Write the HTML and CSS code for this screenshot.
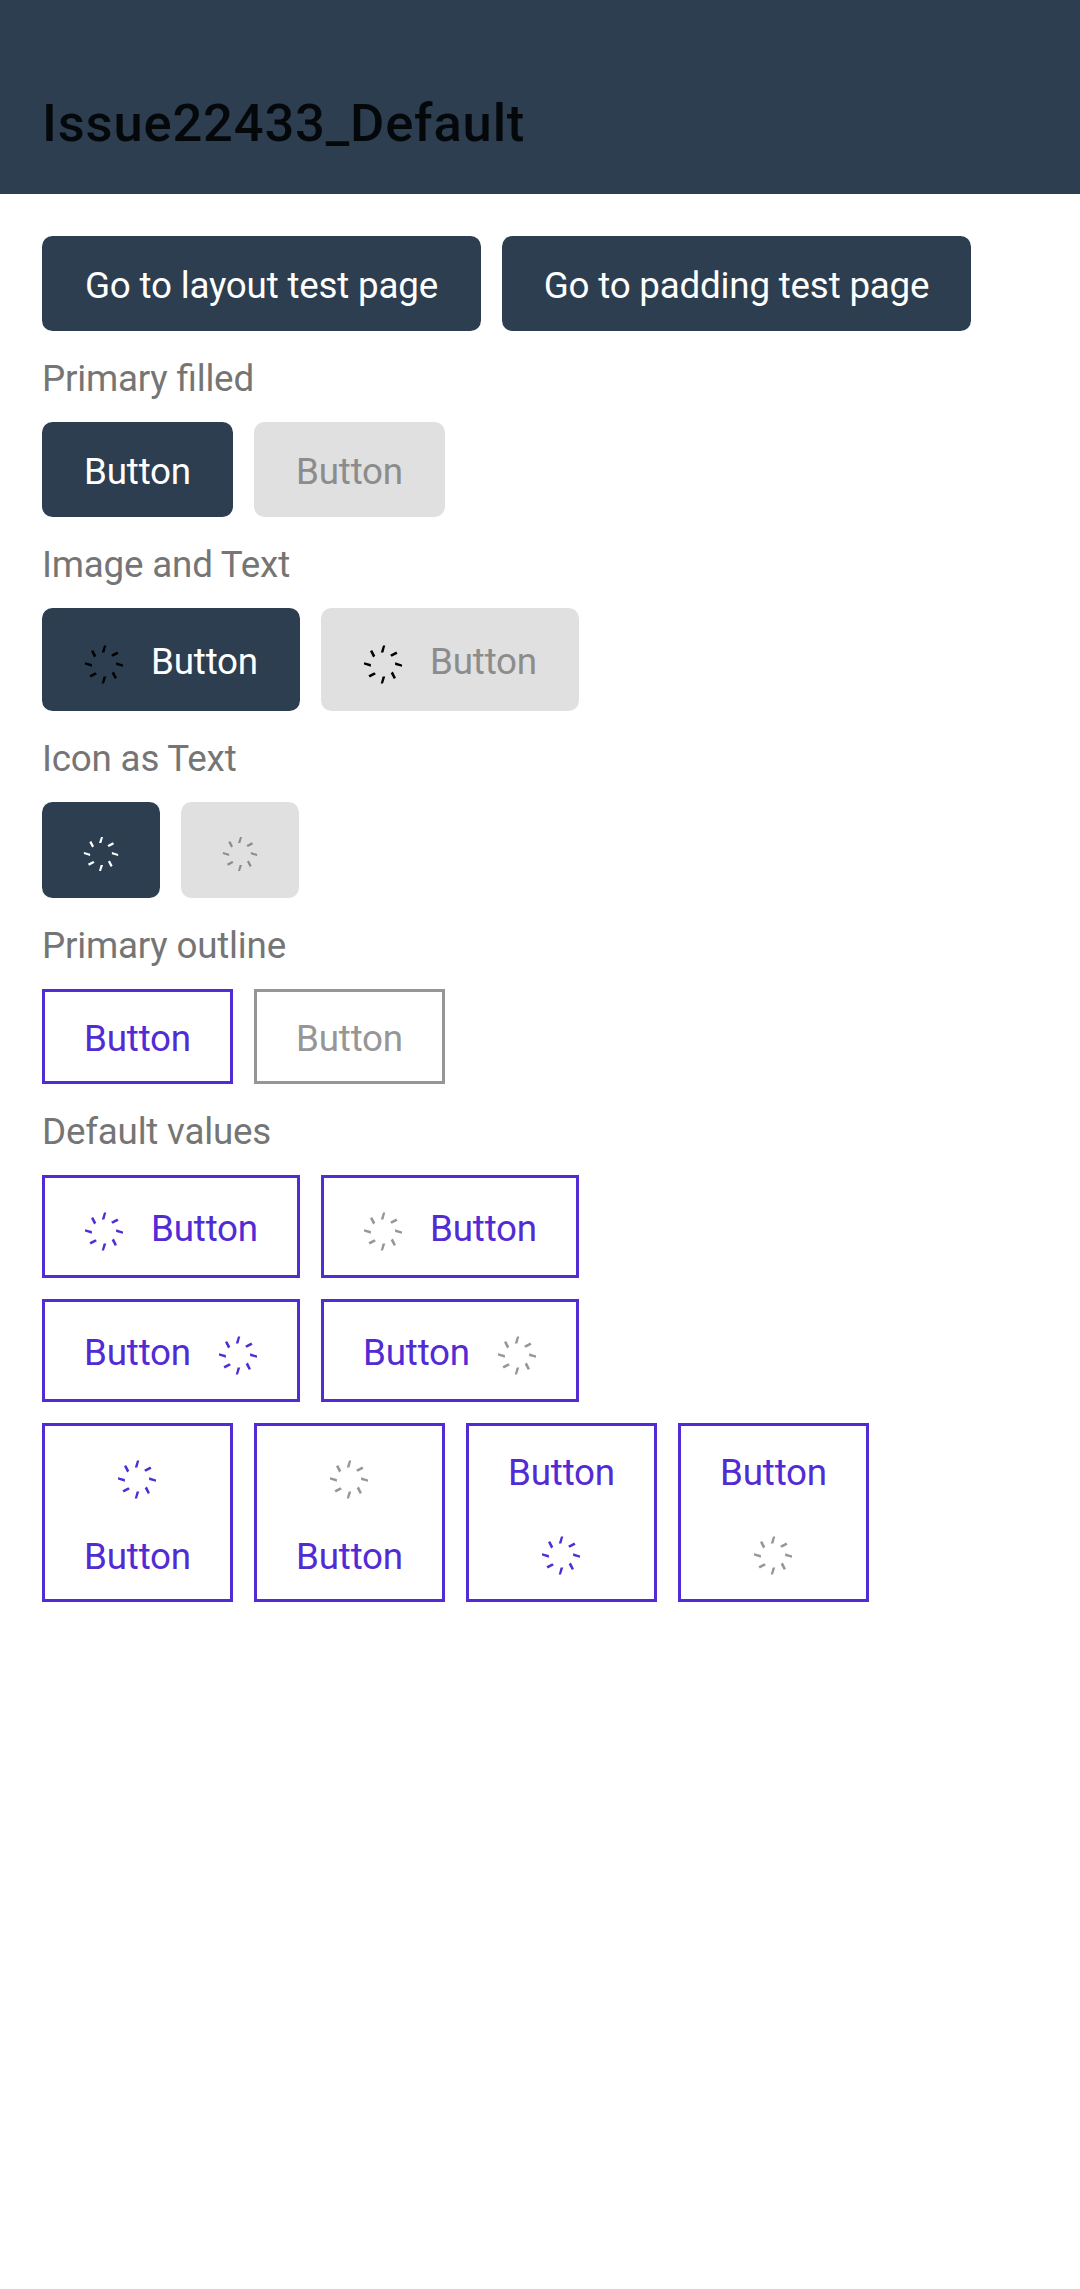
FILE: index.html
```html
<!DOCTYPE html>
<html lang="en">
<head>
<meta charset="utf-8">
<title>Issue22433_Default</title>
<link rel="stylesheet" href="styles.css">
</head>
<body>
<svg class="defs" width="0" height="0" aria-hidden="true">
  <defs>
    <symbol id="spin" viewBox="-20.5 -20.5 41 41">
      <g id="pair">
        <path d="M0-19.5H2.3L.4-12.4H-2.3Z"/>
        <path d="M13.5-13.3L14.9-11.1L8.9-7.9L7.3-10.1Z"/>
      </g>
      <use href="#pair" transform="rotate(90)"/>
      <use href="#pair" transform="rotate(180)"/>
      <use href="#pair" transform="rotate(270)"/>
    </symbol>
  </defs>
</svg>
<header class="bar"><h1>Issue22433_Default</h1></header>
<main class="content">
  <div class="row">
    <button class="btn filled layout"><span>Go to layout test page</span></button>
    <button class="btn filled padding"><span>Go to padding test page</span></button>
  </div>
  <p class="label">Primary filled</p>
  <div class="row">
    <button class="btn filled"><span>Button</span></button>
    <button class="btn filled off"><span>Button</span></button>
  </div>
  <p class="label">Image and Text</p>
  <div class="row">
    <button class="btn filled wide"><svg class="icon black"><use href="#spin"/></svg><span>Button</span></button>
    <button class="btn filled off wide"><svg class="icon black"><use href="#spin"/></svg><span>Button</span></button>
  </div>
  <p class="label">Icon as Text</p>
  <div class="row">
    <button class="btn filled glyph"><svg class="icon"><use href="#spin"/></svg></button>
    <button class="btn filled off glyph"><svg class="icon"><use href="#spin"/></svg></button>
  </div>
  <p class="label">Primary outline</p>
  <div class="row">
    <button class="btn outline"><span>Button</span></button>
    <button class="btn outline off"><span>Button</span></button>
  </div>
  <p class="label">Default values</p>
  <div class="row">
    <button class="btn outline wide"><svg class="icon"><use href="#spin"/></svg><span>Button</span></button>
    <button class="btn outline wide"><svg class="icon gray"><use href="#spin"/></svg><span>Button</span></button>
  </div>
  <div class="row spaced">
    <button class="btn outline wide"><span>Button</span><svg class="icon"><use href="#spin"/></svg></button>
    <button class="btn outline wide"><span>Button</span><svg class="icon gray"><use href="#spin"/></svg></button>
  </div>
  <div class="row spaced">
    <button class="btn outline stack"><svg class="icon"><use href="#spin"/></svg><span>Button</span></button>
    <button class="btn outline stack"><svg class="icon gray"><use href="#spin"/></svg><span>Button</span></button>
    <button class="btn outline stack below"><span>Button</span><svg class="icon"><use href="#spin"/></svg></button>
    <button class="btn outline stack below"><span>Button</span><svg class="icon gray"><use href="#spin"/></svg></button>
  </div>
</main>
</body>
</html>
```
FILE: styles.css
```css
* { box-sizing: border-box; }
body {
  margin: 0;
  min-height: 2289px;
  background: #fff;
  font: 36.75px Roboto, sans-serif;
  font-feature-settings: "liga" 1;
  letter-spacing: -.2px;
}
.defs { display: block; }
.bar {
  height: 194px;
  padding: 92px 42px 0;
  background: #2c3e50;
}
.bar h1 {
  margin: 0;
  font-size: 52.5px;
  line-height: 62px;
  font-weight: 500;
  letter-spacing: .83px;
  color: rgba(0, 0, 0, .87);
}
.content { padding: 42px; }
.row { display: flex; gap: 21px; }
.row.spaced { margin-top: 21px; }
.label {
  margin: 21px 0;
  padding-top: 4px;
  line-height: 45px;
  color: #757575;
}
.btn {
  display: flex;
  align-items: center;
  justify-content: center;
  width: 191px;
  height: 95px;
  padding: 0;
  border: 0;
  font: inherit;
  letter-spacing: inherit;
  white-space: nowrap;
}
.btn span { min-width: 107px; padding-top: 4px; line-height: 45px; }
.filled { border-radius: 10.5px; background: #2c3e50; color: #fff; }
.filled.off { background: #e0e0e0; color: #8c8c8c; }
.outline { border: 3px solid #512bd4; background: #fff; color: #512bd4; }
.outline.off { border-color: #969696; color: #969696; }
.layout { width: 439px; }
.padding { width: 469px; }
.wide { width: 258px; height: 103px; gap: 27px; }
.glyph { width: 118px; height: 96px; }
.icon {
  flex: none;
  width: 40px;
  height: 41px;
  margin-top: 10px;
  fill: currentColor;
}
.black { fill: #000; }
.gray { fill: #969696; }
.glyph .icon { width: 36px; height: 36px; margin-top: 8px; }
.stack {
  flex-direction: column;
  justify-content: flex-start;
  gap: 30px;
  height: 179px;
  padding-top: 33px;
}
.stack .icon { margin: 0 1px 0 0; }
.stack.below { gap: 40px; padding-top: 20px; }
```
